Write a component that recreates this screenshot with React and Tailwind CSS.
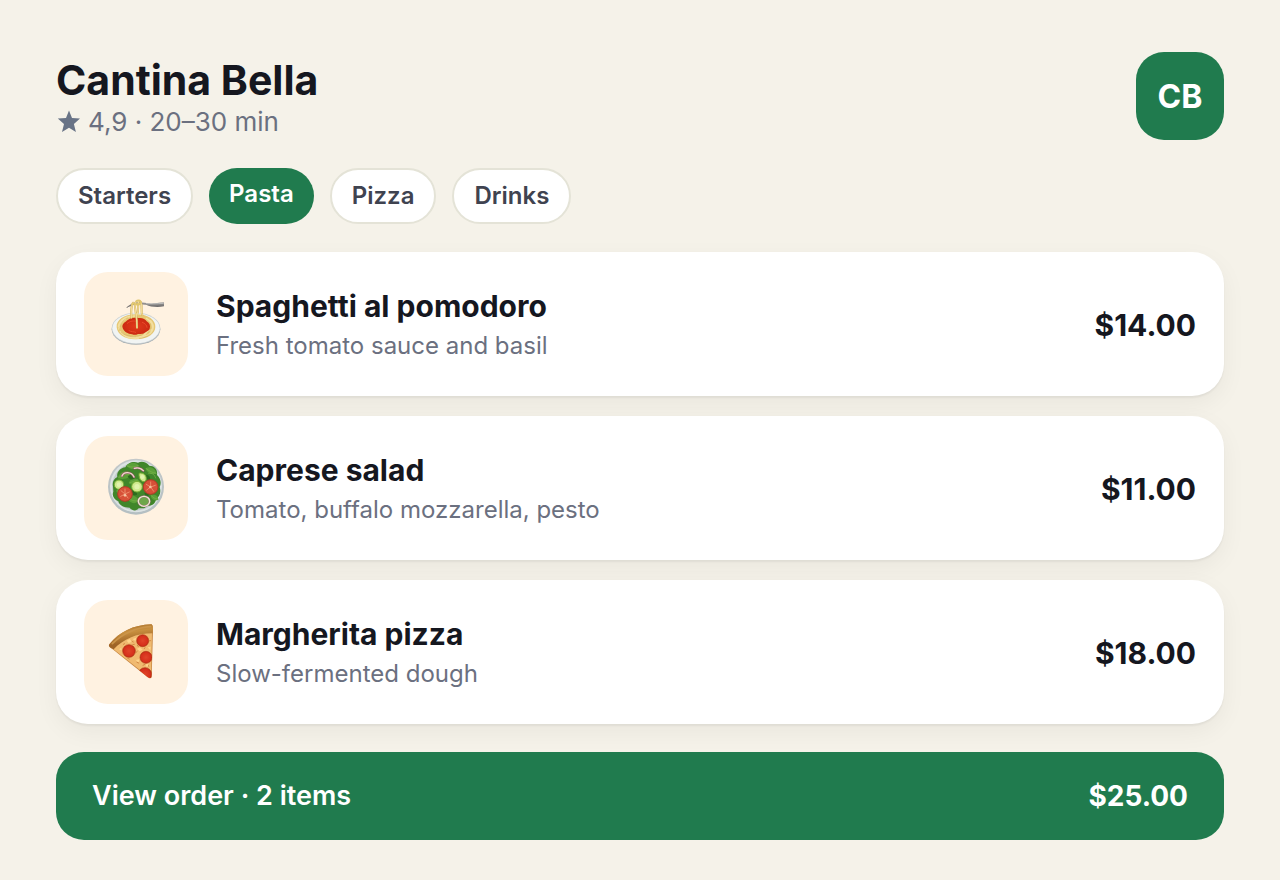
import React from 'react';

function SpaghettiIcon() {
  return (
    <svg viewBox="0 0 240 240" className="size-20" aria-hidden="true">
      <defs>
        <linearGradient id="fork" x1="0" y1="0" x2="0" y2="1">
          <stop offset="0" stopColor="#a3a1a0" />
          <stop offset="1" stopColor="#5f5c5c" />
        </linearGradient>
        <radialGradient id="sauce">
          <stop offset="0" stopColor="#e23a1c" />
          <stop offset="1" stopColor="#cb2a12" />
        </radialGradient>
      </defs>
      <ellipse cx="120" cy="136" rx="73" ry="46" fill="#a9b1b5" />
      <ellipse cx="120" cy="133" rx="73" ry="47" fill="#c9d0d2" />
      <ellipse cx="120" cy="133" rx="71" ry="45" fill="#f1f4f3" />
      <path d="M62 130c-2-22 22-39 56-39 36-2 62 17 60 38 0 20-24 37-58 37-34 1-56-15-58-36Z" fill="#e6c774" />
      <g fill="none" stroke="#f3df9f" strokeWidth="4" strokeLinecap="round">
        <path d="M67 127c4-20 24-31 49-31M72 142c10 14 28 21 50 20M164 110c14 16 8 36-12 45M151 103c17 8 23 25 14 40M68 135c3-16 9-24 21-30M88 157c18 8 44 8 61-2" />
        <path d="M80 150c20 13 51 13 70-1M98 162c12-8 20-6 28 1M140 155c8-9 14-14 25-18" />
      </g>
      <g fill="none" stroke="#c9a04c" strokeWidth="1" strokeLinecap="round">
        <path d="M72 128c2-12 10-21 23-27M76 145c13 11 27 14 43 13M160 116c8 11 6 22-4 30M84 151c18 8 41 8 57 1M130 163c12-1 22-4 30-11" />
      </g>
      <path d="M79 127c2-11 10-13 15-18 8-8 21-9 34-7 13-1 20 4 24 10 9 5 12 14 9 22-3 8-11 8-17 14-9 4-15 0-23 4-9 2-13-3-22-3-11-3-19-12-20-22Z" fill="url(#sauce)" />
      <path d="M94 118c9-8 20-8 27-6M139 115c8 3 14 9 14 15M99 140c8 5 15 2 20 5" fill="none" stroke="#e94a2a" strokeWidth="3" strokeLinecap="round" />
      <path d="M89 72c11-10 23-17 39-18l24 3c13 3 31 0 52-2v12c-22 4-41 1-54-5-15-2-31-3-42 3-6 2-12 4-19 7Z" fill="url(#fork)" />
      <path d="M150 59c14 1 30 1 53-1" fill="none" stroke="#d2d1d0" strokeWidth="2" />
      <g fill="none" strokeLinecap="round">
        <path d="M111 56c-8 18-5 32-5 45M118 56c-5 20 6 30 5 75M128 51c-5 17 3 25-6 44M134 53c7 18-1 28 5 40" stroke="#cda952" strokeWidth="6" />
        <path d="M111 56c-8 18-5 32-5 45M118 56c-5 20 6 30 5 75M128 51c-5 17 3 25-6 44M134 53c7 18-1 28 5 40" stroke="#f1dc98" strokeWidth="4" />
        <path d="M108 61c6-6 14 5 24-3M120 52c4-4 14-5 14 3s-10 10-13 5" stroke="#e0c66c" strokeWidth="5" />
      </g>
    </svg>
  );
}

function SaladIcon() {
  return (
    <svg viewBox="0 0 240 240" className="size-20" aria-hidden="true">
      <defs>
        <linearGradient id="bowl" x1="0" y1="0" x2="0" y2="1">
          <stop offset="0" stopColor="#c3c8c9" />
          <stop offset="1" stopColor="#b4bfc2" />
        </linearGradient>
      </defs>
      <circle cx="120" cy="116" r="84" fill="url(#bowl)" />
      <circle cx="120" cy="115" r="78" fill="#dce3e3" />
      <circle cx="120" cy="116" r="72" fill="#c3cccc" />
      <path d="M51 115c-3-11 2-23 13-28-3-14 8-27 24-29 6-14 24-20 38-14 12-6 26-1 34 9 16 0 26 13 23 28 11 10 14 24 8 36 5 16 0 29-11 36-1 14-13 22-27 20-8 12-17 6-25 8-7 10-21 7-27-2-17 0-31-7-34-19-14-7-20-18-15-29Z" fill="#40862a" />
      <g fill="#5ba038">
        <path d="M65 91c4-17 22-26 36-18 5 15-10 24-36 18ZM91 53c12-12 30-11 38 1-9 13-27 12-38-1ZM148 61c16-8 31 1 33 16-16 4-27-1-33-16ZM60 128c11-10 27-5 30 8-8 11-22 9-30-8ZM91 145c15-8 36 0 37 15-13 11-31 5-37-15ZM164 142c14-5 24 3 23 14-12 4-22-1-23-14ZM98 105c7-17 22-17 32-7-4 15-19 17-32 7Z" />
      </g>
      <g fill="#2c6b1e">
        <path d="M95 84c12-7 19-2 20 8-9 5-16 2-20-8ZM151 80c10 2 13 9 11 16-9 0-14-6-11-16ZM104 129c13-6 20 2 19 11-10 5-17-1-19-11ZM145 135c7-6 13-2 14 7-6 4-12 1-14-7ZM72 140c6-3 11 0 13 7-8 2-12-1-13-7Z" />
      </g>
      <g fill="none" stroke="#7bb34a" strokeWidth="2" strokeLinecap="round">
        <path d="M69 88c11-9 20-10 29-8M94 54c12 5 21 4 32-1M151 62c10 8 18 12 29 14M97 148c9 10 17 12 27 10M64 129c8 5 15 8 24 7M166 143c6 7 11 9 18 10M102 104c9-2 15-6 23-8M158 76c11-2 18 4 21 14" />
      </g>
      <g fill="none" strokeLinecap="round">
        <path d="M78 84c5-14 28-14 36 3M115 61c8-3 20-1 27 7" stroke="#9b4c6d" strokeWidth="7" />
        <path d="M78 84c5-14 28-14 36 3M115 61c8-3 20-1 27 7" stroke="#ede0cb" strokeWidth="4" />
        <ellipse cx="144" cy="160" rx="17" ry="15" fill="#6ea64a" stroke="#9c6779" strokeWidth="6" />
        <ellipse cx="144" cy="160" rx="17" ry="15" stroke="#eee9d1" strokeWidth="4" />
      </g>
      <g fill="#cfea8e" stroke="#77ac35" strokeWidth="3">
        <circle cx="69" cy="110" r="14" />
        <circle cx="123" cy="116" r="16" />
        <path d="M129 76c15-4 26 9 20 23-10 6-21-3-20-23Z" />
      </g>
      <g fill="#e2f3ae">
        <circle cx="69" cy="110" r="7" />
        <circle cx="123" cy="116" r="8" />
        <circle cx="139" cy="87" r="6" />
      </g>
      <g stroke="#b23a25" strokeWidth="3">
        <circle cx="87" cy="138" r="22" fill="#d75038" />
        <circle cx="164" cy="117" r="22" fill="#d75038" />
      </g>
      <g fill="none" stroke="#ec8b6a" strokeWidth="3" strokeLinecap="round">
        <path d="M87 138v-15M87 138l13-6M87 138l9 12M87 138l-13 7M87 138l-12-10M164 117v-15M164 117l14-5M164 117l9 13M164 117l-12 9M164 117l-13-8" />
      </g>
      <circle cx="87" cy="142" r="4" fill="#f6c3a2" />
      <circle cx="163" cy="117" r="4" fill="#f6c3a2" />
    </svg>
  );
}

function PizzaIcon() {
  return (
    <svg viewBox="0 0 240 240" className="size-20" aria-hidden="true">
      <defs>
        <linearGradient id="crust" x1="0.4" y1="0" x2="0.65" y2="1">
          <stop offset="0" stopColor="#a8722f" />
          <stop offset="0.3" stopColor="#c8903f" />
          <stop offset="0.7" stopColor="#9f6427" />
        </linearGradient>
        <radialGradient id="pepperoni">
          <stop offset="0" stopColor="#e0442a" />
          <stop offset="0.8" stopColor="#d6301c" />
          <stop offset="1" stopColor="#b72a15" />
        </radialGradient>
        <clipPath id="slice">
          <path d="M49 109C78 81 119 63 170 61l-3 137c-8 2-13-3-19-8Z" />
        </clipPath>
      </defs>
      <path d="M40 97C69 60 112 39 166 37c5 2 5 8 5 20l-4 139c-4 5-9 2-14-2L50 112c-8-5-13-9-10-15Z" fill="#c98843" />
      <path d="M49 109C78 81 119 63 168 61l-3 132c-5 4-8 1-13-3Z" fill="#f0ba70" />
      <path d="M40 97C69 60 112 39 166 37c5 2 5 12 4 27-50 0-87 17-117 48-8-3-18-9-13-15Z" fill="url(#crust)" />
      <path d="M49 95c31-30 69-48 115-51" fill="none" stroke="#cb9449" strokeWidth="5" strokeLinecap="round" />
      <g fill="#ffd58c">
        <path d="M92 86l9-5 7 8-10 4ZM110 81l11-4-3 10ZM123 110l9-4 8 7-9 5ZM69 112l7-5 1 8ZM119 144l11-2-2 10ZM148 158l10-4 3 8-9 2ZM155 106l9-2-1 11Z" />
      </g>
      <g fill="none" stroke="#d48a45" strokeWidth="3" strokeLinecap="round">
        <path d="M83 98l2-4M110 98l5-1M124 100l3 4M120 122l4-5M123 151l5 2M141 160l6-3M145 110l2-3M95 139l5 2M148 169l-8 1M159 87l5-1M108 88l4 2M158 159v4" />
      </g>
      <g clipPath="url(#slice)" fill="url(#pepperoni)" stroke="#b83a18" strokeWidth="2">
        <circle cx="140" cy="86" r="18" />
        <circle cx="99" cy="117" r="19" />
        <circle cx="150" cy="136" r="18" />
        <circle cx="147" cy="187" r="20" />
      </g>
    </svg>
  );
}

const categories = ['Starters', 'Pasta', 'Pizza', 'Drinks'];

const dishes = [
  { name: 'Spaghetti al pomodoro', description: 'Fresh tomato sauce and basil', price: '$14.00', Icon: SpaghettiIcon },
  { name: 'Caprese salad', description: 'Tomato, buffalo mozzarella, pesto', price: '$11.00', Icon: SaladIcon },
  { name: 'Margherita pizza', description: 'Slow-fermented dough', price: '$18.00', Icon: PizzaIcon },
];

function CategoryButton({ label, active }) {
  return (
    <button
      type="button"
      aria-pressed={active}
      className={
        active
          ? 'rounded-full bg-[#207b4e] px-5 pt-2 pb-3 text-2xl leading-9 font-semibold text-white'
          : 'rounded-full border-2 border-[#e4e3d7] bg-white px-5 py-2 text-2xl leading-9 font-semibold text-[#3f4350]'
      }
    >
      {label}
    </button>
  );
}

function DishCard({ name, description, price, Icon }) {
  return (
    <li className="flex items-center gap-7 rounded-[32px] bg-white px-7 py-5 shadow-[0_2px_2px_rgba(0,0,0,0.05),0_8px_24px_rgba(0,0,0,0.05)]">
      <div className="flex size-26 shrink-0 items-center justify-center rounded-3xl bg-[#fff2e1]">
        <Icon />
      </div>
      <div className="min-w-0 flex-1 pt-1">
        <h2 className="text-[30px] leading-10 font-bold">{name}</h2>
        <p className="text-2xl leading-10 text-[#6b7080]">{description}</p>
      </div>
      <p className="pt-0.5 text-[30px] leading-10 font-bold">{price}</p>
    </li>
  );
}

export default function App() {
  return (
    <main className="flex min-h-screen flex-col gap-7 bg-[#f5f2e9] px-14 pt-13 pb-10 font-['Inter',sans-serif] text-[#15171f]">
      <header className="flex items-center justify-between">
        <div className="pt-1">
          <h1 className="text-[41px] leading-12 font-bold">Cantina Bella</h1>
          <p className="flex items-center gap-2 text-[26px] leading-9 text-[#6b7080]">
            <svg viewBox="0 0 24 24" className="size-6" fill="#687386" aria-hidden="true">
              <path d="M13 .5l3 7.5 8 .6-6.1 5.3 2 8.1-6.9-4.3L6 22l2-8.1L1.8 8.6l8.2-.6Z" />
            </svg>
            4,9 · 20–30 min
          </p>
        </div>
        <div className="flex size-22 items-center justify-center rounded-[28px] bg-[#207b4e] pt-0.5 text-[32px] font-bold text-white">
          CB
        </div>
      </header>

      <nav aria-label="Menu categories" className="flex flex-wrap gap-4">
        {categories.map((label) => (
          <CategoryButton key={label} label={label} active={label === 'Pasta'} />
        ))}
      </nav>

      <ul className="flex flex-col gap-5">
        {dishes.map((dish) => (
          <DishCard key={dish.name} {...dish} />
        ))}
      </ul>

      <button
        type="button"
        className="flex items-center justify-between rounded-[28px] bg-[#207b4e] px-9 py-6 text-[28px] leading-10 font-semibold text-white"
      >
        <span className="text-[27px]">View order · 2 items</span>
        <span className="font-bold">$25.00</span>
      </button>
    </main>
  );
}
